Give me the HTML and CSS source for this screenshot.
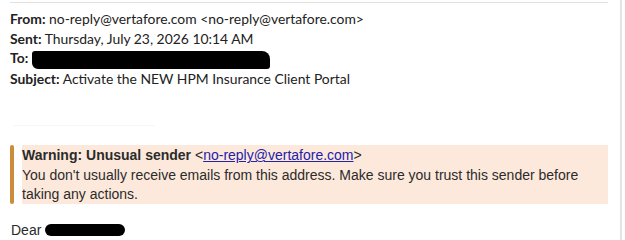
FILE: index.html
```html
<!DOCTYPE html>
<html lang="en">
<head>
    <meta charset="UTF-8">
    <meta name="viewport" content="width=device-width, initial-scale=1.0">
    <title>Activate the NEW HPM Insurance Client Portal</title>
    <link rel="stylesheet" href="styles.css">
</head>
<body>
    <div class="window">
        <div class="headers">
            <div class="row"><b>From:</b> no-reply@vertafore.com &lt;no-reply@vertafore.com&gt;</div>
            <div class="row"><b>Sent:</b> Thursday, July 23, 2026 10:14 AM</div>
            <div class="row"><b>To:</b> <span class="redact redact-to"></span></div>
            <div class="row"><b>Subject:</b> Activate the NEW HPM Insurance Client Portal</div>
        </div>

        <div class="faint"></div>

        <div class="warning">
            <div class="bar"></div>
            <div class="warning-text">
                <b>Warning: Unusual sender</b> &lt;<a href="#">no-reply@vertafore.com</a>&gt;<br>
                You don't usually receive emails from this address. Make sure you trust this sender before taking any actions.
            </div>
        </div>

        <p class="greeting">Dear <span class="redact redact-name"></span></p>
    </div>
</body>
</html>
```

FILE: styles.css
```css
body {
    margin: 0;
    background: #fff;
    width: 625px;
    height: 240px;
    overflow: hidden;
}
.window {
    height: 240px;
    border-right: 2px solid #e4e4e4;
    width: 622px;
    box-sizing: border-box;
    padding: 2px 12px 0 10px;
}
.headers {
    border-top: 1px solid #e1e1e1;
    padding-top: 6px;
    font-family: Lato, "Open Sans", sans-serif;
    font-size: 13.9px;
    line-height: 19.7px;
    color: #222;
}
.headers b {
    font-weight: bold;
}
.redact {
    display: inline-block;
    background: #000;
    vertical-align: middle;
}
.redact-to {
    width: 238px;
    height: 18px;
    border-radius: 3px 8px 3px 6px;
    vertical-align: -6px;
}
.faint {
    margin: 36px 0 0 3px;
    width: 142px;
    border-top: 1px solid #f6f6f6;
}
.warning {
    display: flex;
    gap: 8px;
    margin-top: 19px;
    height: 59px;
}
.bar {
    width: 4px;
    background: #cc8c3a;
    border-radius: 2px;
}
.warning-text {
    flex: 1;
    background: #fde9db;
    padding: 1px 20px 0 0;
    font-family: "Liberation Sans", Arial, sans-serif;
    font-size: 14px;
    line-height: 19.5px;
    color: #2b2b2b;
}
.warning-text a {
    color: #2222aa;
}
.greeting {
    margin: 18px 0 0 1px;
    font-family: "Liberation Sans", Arial, sans-serif;
    font-size: 14px;
    color: #2b2b2b;
}
.redact-name {
    width: 80px;
    height: 12px;
    border-radius: 6px;
    vertical-align: -1px;
}
```
